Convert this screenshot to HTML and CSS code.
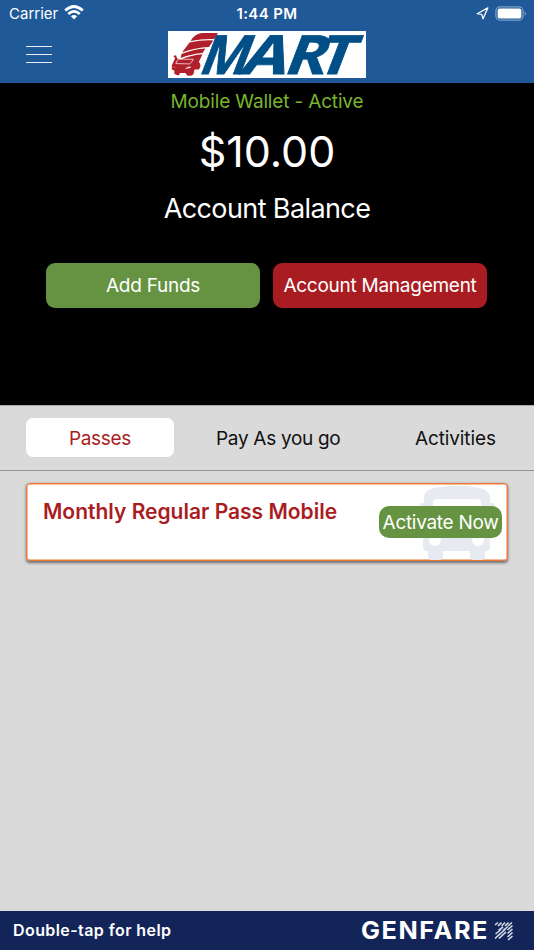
FILE: index.html
```html
<!DOCTYPE html>
<html lang="en">
<head>
<meta charset="utf-8">
<title>Mobile Wallet</title>
<link rel="stylesheet" href="styles.css">
</head>
<body>
<div class="app">
  <header class="header">
    <div class="status">
      <div class="carrier"><span>Carrier</span>
        <svg width="20" height="15" viewBox="0 0 20 15" fill="none" stroke="#fff" stroke-width="2.8"><path d="M1.2 5.6Q10-2.6 18.8 5.6M4.3 9Q10 3.7 15.7 9"/><path d="M10 14.4L6.9 11.3Q10 8.5 13.1 11.3Z" fill="#fff" stroke="none"/></svg>
      </div>
      <div class="clock">1:44 PM</div>
      <div class="indicators">
        <svg width="13" height="13" viewBox="0 0 13 13" fill="none" stroke="#fff" stroke-width="1.3" stroke-linejoin="round"><path d="M11.8 .9L1.2 6.7L5.7 7.4L7 11.8Z"/></svg>
        <svg width="32" height="15" viewBox="0 0 32 15"><rect x=".9" y=".9" width="27.2" height="13.2" rx="4" fill="none" stroke="#7d9fc6" stroke-width="1.2"/><rect x="2.6" y="2.6" width="23.8" height="9.8" rx="2.2" fill="#fff"/><path d="M29.6 5.3Q32.6 7.5 29.6 9.7Z" fill="#7d9fc6"/></svg>
      </div>
    </div>
    <div class="brandbar">
      <div class="menu"><i></i><i></i><i></i></div>
      <svg class="logo" width="198" height="47" viewBox="0 0 198 47">
        <rect width="198" height="47" fill="#fff"/>
        <g fill="#b01f2a">
          <path d="M22.5 10Q27 2.6 34 2H50L46.3 8Q34 7.6 22.5 10Z"/>
          <path d="M21.5 11.6Q33 8.9 45.3 9.4L41 16Q27 16.6 14 21.5Z"/>
          <path d="M13.5 23Q25 18 37.5 17.4L34.5 22Q24 22.8 12.6 27Z"/>
          <path d="M12.4 28.5Q24 24 34.5 23.3L30.8 31Q34 34 31 38.5H26.5L25.5 43.3Q23 45.6 19.2 44.4L17.5 42H12L11 44.2Q8 44.6 6.2 42.5L6.5 39.7L3.7 38.3Q3.3 33.5 6 29.8L7 27L5.2 25L8 24.3L9.2 27.6Z"/>
        </g>
        <path d="M7.8 32.6Q8.9 28.5 11.2 28.2L25.3 28.3Q23.5 32 21.6 32.9Z" fill="#b01f2a" stroke="#fff" stroke-width=".7"/>
        <path d="M4.6 36L7.4 36.6M17.4 37.4Q20 35.4 23 35.7Q22 37.6 17.4 37.4Z" fill="#fff" stroke="#fff" stroke-width=".3"/>
        <g class="logo-text" transform="translate(0 43) skewX(-21)">
          <text x="29" y="0" textLength="48" lengthAdjust="spacingAndGlyphs">M</text>
          <text x="71" y="0" textLength="45" lengthAdjust="spacingAndGlyphs">A</text>
          <text x="114" y="0" textLength="41" lengthAdjust="spacingAndGlyphs">R</text>
          <text x="146" y="0" textLength="36" lengthAdjust="spacingAndGlyphs">T</text>
        </g>
      </svg>
    </div>
  </header>
  <section class="wallet">
    <div class="wallet-status">Mobile Wallet - Active</div>
    <div class="amount">$10.00</div>
    <div class="balance">Account Balance</div>
    <div class="actions">
      <div class="button green">Add Funds</div>
      <div class="button red">Account Management</div>
    </div>
  </section>
  <nav class="tabs">
    <div class="tab active">Passes</div>
    <div class="tab pay">Pay As you go</div>
    <div class="tab activities">Activities</div>
  </nav>
  <main class="content">
    <article class="pass">
      <svg class="bus" width="82" height="75" viewBox="0 0 82 75" fill="#e7eaf0">
        <path fill-rule="evenodd" d="M8 12Q9 5 18 3Q41-2 64 3Q73 5 74 12V18H75Q79 18 79 22V36Q79 40 74 40V63Q74 66 70 66H69V71Q69 75 65 75H58Q54 75 54 71V66H27V71Q27 75 23 75H16Q12 75 12 71V66H11Q7 66 7 62V40Q3 40 3 36V22Q3 18 7 18H8ZM21 14Q17 14 17 18V36Q17 40 21 40H61Q65 40 65 36V18Q65 14 61 14ZM19 49A6 6 0 1 0 19 61A6 6 0 1 0 19 49ZM62 49A6 6 0 1 0 62 61A6 6 0 1 0 62 49Z"/>
      </svg>
      <h2>Monthly Regular Pass Mobile</h2>
      <div class="activate">Activate Now</div>
    </article>
  </main>
  <footer class="footer">
    <span class="help">Double-tap for help</span>
    <div class="genfare">
      <svg width="128" height="24" viewBox="0 0 128 24"><text x="0" y="20" textLength="128" lengthAdjust="spacingAndGlyphs">GENFARE</text></svg>
      <svg width="20" height="20" viewBox="0 0 20 20" fill="none" stroke="#d5dae8" stroke-width="1.6"><path d="M1 4L4 1.5M4 5L7.5 1.5M7.5 5L11 1.5M11 5L14.5 1.5M14 5L18 1.5M4.5 9.5L9 6M9 9.5L14 5.5M13.5 9L18.5 4.5M1.5 13L6.5 9M5 14L12 7.5M13.5 12.5L18.5 8M1 17.5L6 12.8M5 17.5L12 10.8M13.5 16L18.5 11.5M14 19L18.5 15"/></svg>
    </div>
  </footer>
</div>
</body>
</html>
```
FILE: styles.css
```css
* { box-sizing: border-box; }
body { margin: 0; font-family: Inter, "Liberation Sans", sans-serif; }
svg { display: block; flex: none; overflow: visible; }
.app { width: 534px; height: 950px; display: flex; flex-direction: column; background: #dadada; overflow: hidden; white-space: nowrap; }
.header { height: 83px; background: #1f5998; color: #fff; flex: none; }
.status { height: 27px; display: grid; grid-template-columns: 1fr auto 1fr; align-items: center; padding: 0 7px 0 9px; }
.carrier { display: flex; align-items: center; gap: 6px; font-size: 15px; }
.carrier svg { margin-top: -2px; }
.clock { font-size: 15px; font-weight: 600; letter-spacing: .4px; margin-right: 2px; }
.indicators { display: flex; justify-content: flex-end; align-items: center; gap: 6px; }
.brandbar { display: flex; align-items: flex-start; padding: 4px 0 0 26px; }
.menu { width: 26px; display: flex; flex-direction: column; gap: 6.7px; margin: 14.5px 116px 0 0; }
.menu i { height: 1.4px; background: #e8eef5; }
.logo-text { font: 700 54px "Open Sans", sans-serif; fill: #004f87; stroke: #004f87; stroke-width: .8px; }
.wallet { height: 322px; flex: none; background: #000; color: #fff; display: flex; flex-direction: column; align-items: center; }
.wallet-status { margin-top: 7px; height: 24px; line-height: 24px; color: #78b42d; font-size: 19px; letter-spacing: -.16px; }
.amount { margin-top: 9px; height: 56px; line-height: 56px; font-size: 43px; }
.balance { margin-top: 12px; height: 36px; line-height: 36px; font-size: 27px; letter-spacing: -.6px; }
.actions { margin: 36.4px 1px 0 0; display: flex; gap: 13px; }
.button { width: 214px; height: 45px; line-height: 46px; border-radius: 9px; text-align: center; font-size: 19px; letter-spacing: -.26px; }
.green { background: #659341; }
.red { background: #a91d22; }
.tabs { height: 66px; flex: none; border-top: 1px solid #aaa; border-bottom: 1px solid #929292; display: flex; align-items: center; padding: 0 0 1px 26px; color: #111; font-size: 19px; letter-spacing: -.3px; }
.tab { height: 39px; line-height: 41px; }
.active { width: 148px; text-align: center; background: #fff; color: #a91d22; border-radius: 7px; }
.pay { margin-left: 42px; width: 124px; }
.activities { margin-left: 75px; letter-spacing: -.12px; }
.content { flex: 1; padding: 12px 26px 0; }
.pass { position: relative; height: 78px; display: flex; justify-content: space-between; background: #fff; border: 1px solid #ed7937; border-radius: 4px; box-shadow: inset 0 0 0 .5px #ed7937, 0 1.5px 3px rgba(0,0,0,.5); padding: 0 5px 0 16px; }
.bus { position: absolute; right: 9px; top: 1px; }
.pass h2 { margin: 14px 0 0; font-size: 21px; line-height: 28px; height: 28px; font-weight: 600; color: #a91d22; }
.activate { position: relative; margin-top: 22px; width: 123px; height: 32px; line-height: 33px; border-radius: 10px; background: #659341; color: #fff; text-align: center; font-size: 19px; letter-spacing: -.3px; }
.footer { height: 39px; flex: none; background: #132558; color: #fff; display: flex; align-items: center; justify-content: space-between; padding: 0 20px 0 13px; }
.help { font-size: 16px; font-weight: 600; letter-spacing: .42px; padding-bottom: 2px; }
.genfare { display: flex; align-items: center; gap: 5px; }
.genfare text { font: 700 24px Inter, sans-serif; fill: #fff; letter-spacing: 1.5px; }
```
